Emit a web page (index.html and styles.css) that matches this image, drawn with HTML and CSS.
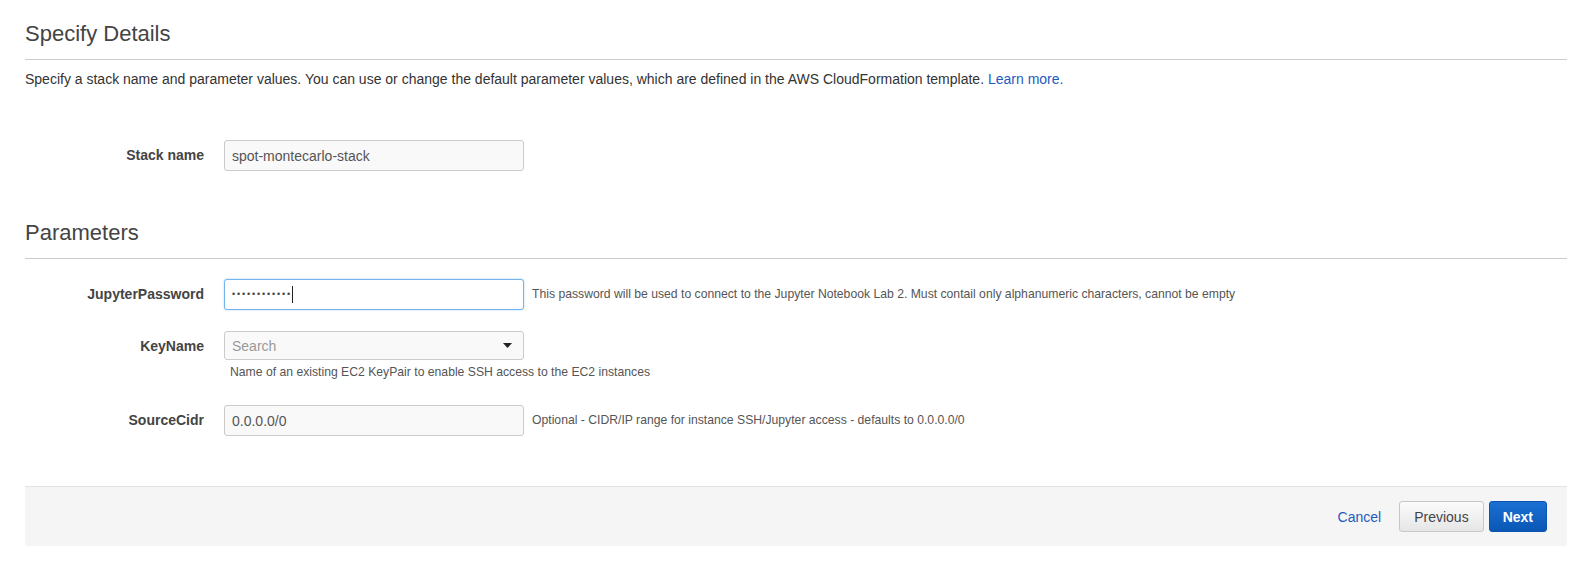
FILE: index.html
```html
<!DOCTYPE html>
<html>
<head>
<meta charset="utf-8">
<title>Specify Details</title>
<link rel="stylesheet" href="styles.css">
</head>
<body>
<div class="page">
  <h2 class="section-title">Specify Details</h2>
  <p class="desc">Specify a stack name and parameter values. You can use or change the default parameter values, which are defined in the AWS CloudFormation template. <a class="link" href="#">Learn more.</a></p>

  <div class="row row-stack">
    <label class="label">Stack name</label>
    <div class="field-col">
      <input class="field" type="text" value="spot-montecarlo-stack">
    </div>
  </div>

  <h2 class="section-title section-params">Parameters</h2>

  <div class="row row-first">
    <label class="label">JupyterPassword</label>
    <div class="field-col">
      <div class="field field-focus"><span class="dots">••••••••••••</span><span class="caret"></span></div>
    </div>
    <div class="help help-side">This password will be used to connect to the Jupyter Notebook Lab 2. Must contail only alphanumeric characters, cannot be empty</div>
  </div>

  <div class="row row-key">
    <label class="label">KeyName</label>
    <div class="field-col">
      <div class="select-wrap">
        <input class="field field-select" type="text" placeholder="Search">
        <svg class="select-arrow" width="9" height="5" viewBox="0 0 9 5"><path d="M0 0 L9 0 L4.5 5 Z" fill="#222"/></svg>
      </div>
      <div class="help help-below">Name of an existing EC2 KeyPair to enable SSH access to the EC2 instances</div>
    </div>
  </div>

  <div class="row row-cidr">
    <label class="label">SourceCidr</label>
    <div class="field-col">
      <input class="field" type="text" value="0.0.0.0/0">
    </div>
    <div class="help help-side">Optional - CIDR/IP range for instance SSH/Jupyter access - defaults to 0.0.0.0/0</div>
  </div>

  <div class="footer">
    <a class="cancel" href="#">Cancel</a>
    <button class="btn btn-prev" type="button">Previous</button>
    <button class="btn btn-next" type="button">Next</button>
  </div>
</div>
</body>
</html>
```

FILE: styles.css
```css
html, body {
  margin: 0;
  padding: 0;
  background: #ffffff;
}

body {
  font-family: "Liberation Sans", Arial, Helvetica, sans-serif;
  color: #333333;
}

.page {
  padding: 21px 7px 0 25px;
}

.section-title {
  margin: 0;
  font-size: 22px;
  line-height: 26px;
  font-weight: normal;
  color: #444444;
  padding-bottom: 12px;
  border-bottom: 1px solid #cccccc;
}

.section-params {
  margin-top: 49px;
}

.desc {
  margin: 11px 0 0 0;
  font-size: 14px;
  line-height: 17px;
  color: #333333;
}

.link {
  color: #1e5bbf;
  text-decoration: none;
}

.row {
  display: flex;
  align-items: flex-start;
}

.row-stack {
  margin-top: 52px;
}

.row-first {
  margin-top: 20px;
}

.row-key {
  margin-top: 21px;
}

.row-cidr {
  margin-top: 25px;
}

.label {
  width: 179px;
  margin-right: 20px;
  text-align: right;
  font-size: 14px;
  font-weight: bold;
  line-height: 30px;
  color: #444444;
  flex: none;
}

.field-col {
  width: 300px;
  flex: none;
}

.field {
  box-sizing: border-box;
  display: block;
  width: 300px;
  height: 31px;
  margin: 0;
  padding: 0 7px;
  border: 1px solid #cccccc;
  border-radius: 3px;
  background: #f9f9f9;
  font-family: "Liberation Sans", Arial, Helvetica, sans-serif;
  font-size: 14px;
  color: #555555;
  outline: none;
}

.field::placeholder {
  color: #999999;
}

.field-focus {
  display: flex;
  align-items: center;
  background: #ffffff;
  border-color: #74b3ec;
  box-shadow: 0 0 2px rgba(102, 175, 233, 0.6);
}

.dots {
  font-size: 9px;
  letter-spacing: 1.85px;
  color: #444444;
  line-height: 1;
}

.caret {
  display: inline-block;
  width: 1px;
  height: 17px;
  background: #222222;
}

.select-wrap {
  position: relative;
}

.field-select {
  height: 29px;
  padding-right: 24px;
}

.select-arrow {
  position: absolute;
  right: 12px;
  top: 12px;
}

.help {
  font-size: 12.2px;
  color: #555555;
}

.help-side {
  margin-left: 8px;
  line-height: 31px;
}

.help-below {
  margin-top: 5px;
  margin-left: 6px;
  line-height: 15px;
  white-space: nowrap;
}

.footer {
  margin-top: 50px;
  height: 59px;
  border-top: 1px solid #e3e3e3;
  background: #f5f5f5;
  display: flex;
  align-items: center;
  justify-content: flex-end;
  padding-right: 20px;
}

.cancel {
  font-size: 14px;
  color: #1e5bbf;
  text-decoration: none;
  margin-right: 18px;
}

.btn {
  height: 31px;
  padding: 0 14px;
  border-radius: 3px;
  font-family: "Liberation Sans", Arial, Helvetica, sans-serif;
  font-size: 14px;
  cursor: pointer;
}

.btn-prev {
  border: 1px solid #c8c8c8;
  background: linear-gradient(#fbfbfb, #e6e6e6);
  color: #444444;
  margin-right: 5px;
}

.btn-next {
  padding: 0 13px;
  border: 1px solid #0b55b0;
  background: linear-gradient(#1a70d2, #0a57b5);
  color: #ffffff;
  font-weight: bold;
}
```
